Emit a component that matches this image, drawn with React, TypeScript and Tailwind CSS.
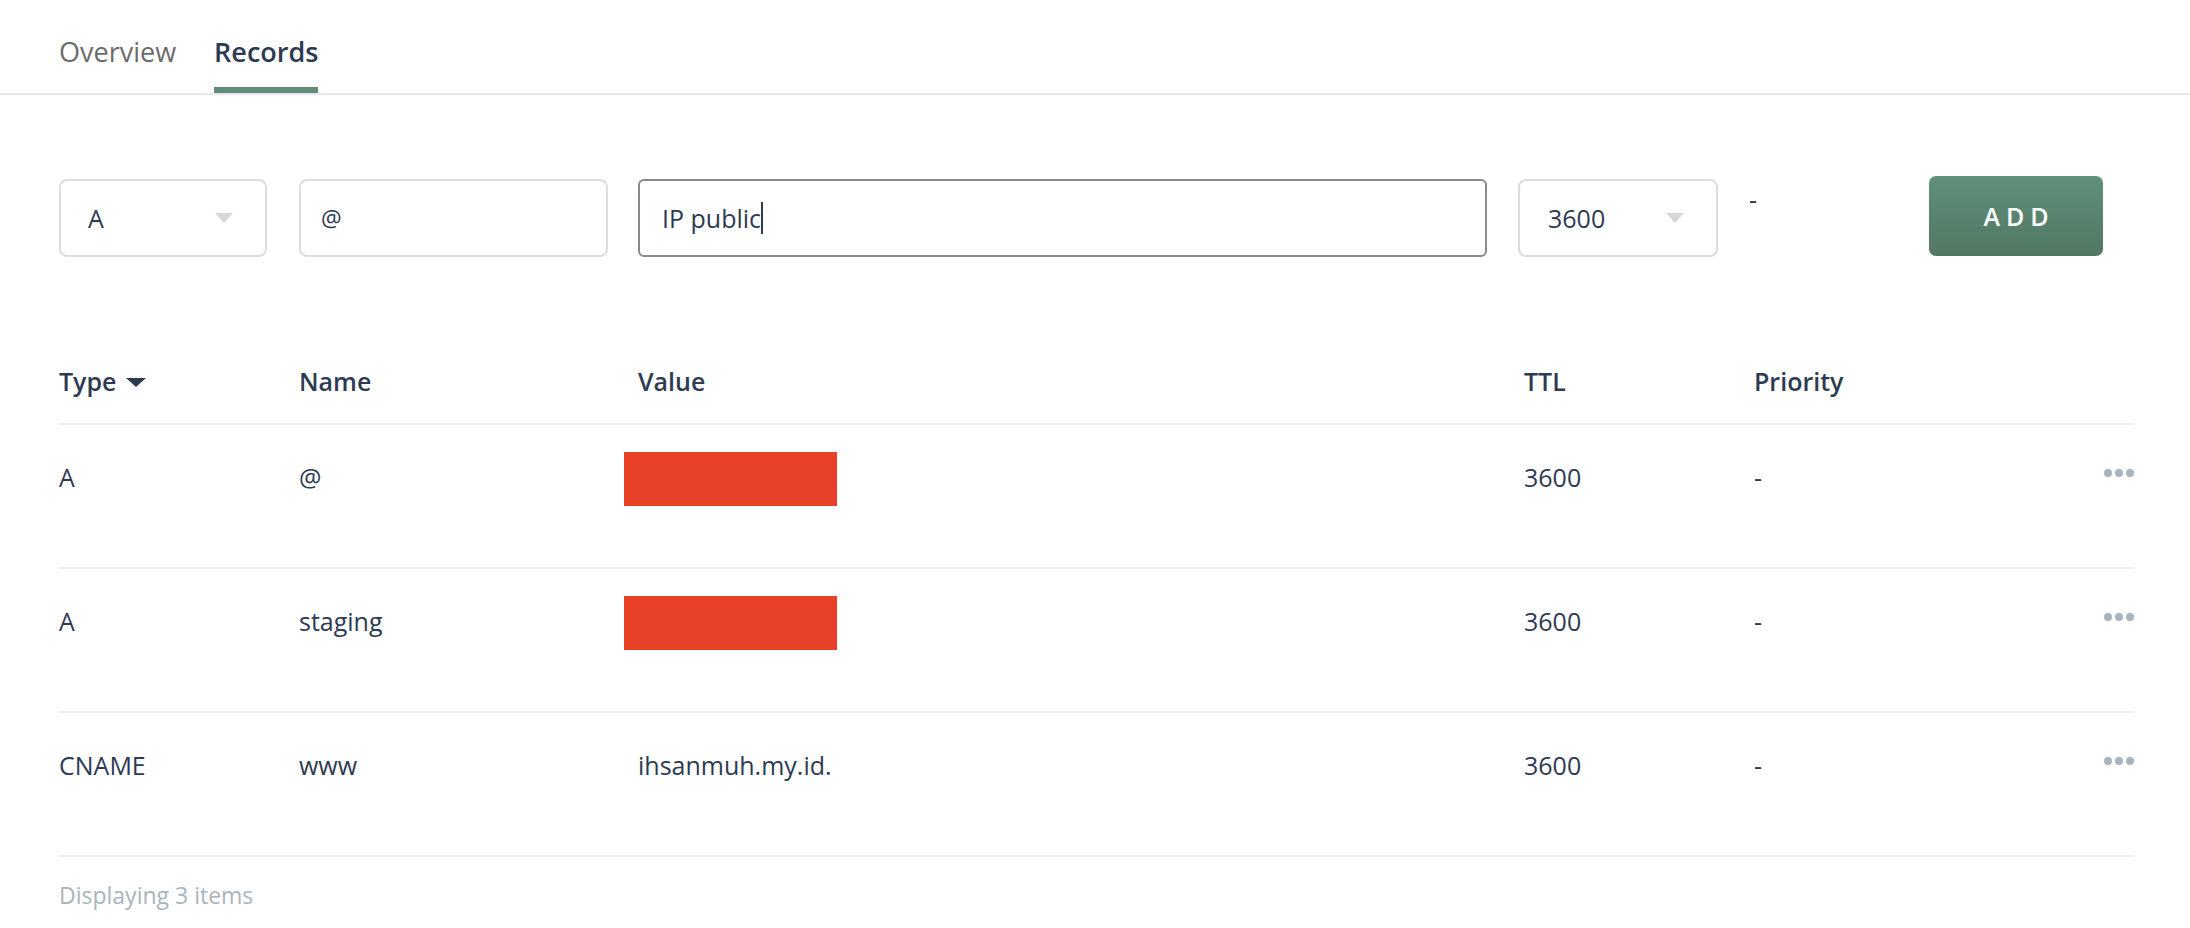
import React from "react";

type DnsRecord = {
  type: string;
  name: string;
  value: string | null; // null = value hidden behind a red block
  ttl: string;
  priority: string;
};

const records: DnsRecord[] = [
  { type: "A", name: "@", value: null, ttl: "3600", priority: "-" },
  { type: "A", name: "staging", value: null, ttl: "3600", priority: "-" },
  { type: "CNAME", name: "www", value: "ihsanmuh.my.id.", ttl: "3600", priority: "-" },
];

const cols = "grid grid-cols-[240px_339px_886px_230px_1fr_auto]";

function Caret() {
  return (
    <span className="h-0 w-0 border-l-[9px] border-r-[9px] border-t-[10px] border-l-transparent border-r-transparent border-t-[#d7d7d7]" />
  );
}

function Dots() {
  return (
    <div className="flex h-[54px] items-center gap-[3px] pb-[12px]">
      <span className="h-[8px] w-[8px] rounded-full bg-[#aab4bd]" />
      <span className="h-[8px] w-[8px] rounded-full bg-[#aab4bd]" />
      <span className="h-[8px] w-[8px] rounded-full bg-[#aab4bd]" />
    </div>
  );
}

export default function App() {
  return (
    <div className="min-h-[928px] w-full bg-white font-['Open_Sans',sans-serif] text-[25px] leading-[30px] text-[#2d3a52]">
      {/* tabs */}
      <div className="flex h-[95px] items-end gap-[38px] border-b-2 border-[#e4e8ec] pl-[59px] text-[27px]">
        <div className="pb-[26px] text-[#6b6b6b]">Overview</div>
        <div className="border-b-[6px] border-[#5e8c76] pb-[20px] font-semibold">Records</div>
      </div>

      {/* add record form */}
      <div className="mt-[84px] flex items-start pl-[59px]">
        <div className="flex h-[78px] w-[208px] items-center justify-between rounded-[8px] border-2 border-[#dcdcdc] pl-[27px] pr-[32px]">
          <span>A</span>
          <Caret />
        </div>
        <div className="ml-[32px] flex h-[78px] w-[309px] items-center rounded-[8px] border-2 border-[#dcdcdc] pl-[20px]">
          <span className="text-[23px]">@</span>
        </div>
        <div className="ml-[30px] flex h-[78px] w-[849px] items-center rounded-[6px] border-2 border-[#8a8a8a] pl-[22px]">
          <span>IP public</span>
          <span className="h-[32px] w-[2px] bg-[#2d3a52]" />
        </div>
        <div className="ml-[31px] flex h-[78px] w-[200px] items-center justify-between rounded-[8px] border-2 border-[#dcdcdc] pl-[28px] pr-[32px]">
          <span>3600</span>
          <Caret />
        </div>
        <div className="ml-[31px] mt-[5px] w-[8px]">-</div>
        <button className="-mt-[3px] ml-[172px] flex h-[80px] w-[174px] items-center justify-center rounded-[7px] bg-gradient-to-b from-[#60907a] to-[#527864] pl-[6px] text-[25px] font-semibold tracking-[0.24em] text-white">
          ADD
        </button>
      </div>

      {/* records table */}
      <div className="ml-[59px] mt-[82px] w-[2075px]">
        <div className={`${cols} h-[86px] items-center border-b-2 border-[#f0f0f0] font-semibold`}>
          <div className="flex items-center gap-[10px]">
            <span>Type</span>
            <span className="mt-[2px] h-0 w-0 border-l-[10px] border-r-[10px] border-t-[9px] border-l-transparent border-r-transparent border-t-[#2d3a52]" />
          </div>
          <div>Name</div>
          <div>Value</div>
          <div>TTL</div>
          <div>Priority</div>
          <div className="w-[30px]" />
        </div>

        {records.map((r, i) => (
          <div key={i} className={`${cols} h-[144px] items-start border-b-2 border-[#f0f0f0] pt-[27px]`}>
            <div className="flex h-[50px] items-center">{r.type}</div>
            <div className="flex h-[50px] items-center">{r.name}</div>
            <div className="flex h-[50px] items-center">
              {r.value ? r.value : <div className="-ml-[14px] mt-[4px] h-[54px] w-[213px] shrink-0 bg-[#e94127]" />}
            </div>
            <div className="flex h-[50px] items-center">{r.ttl}</div>
            <div className="flex h-[50px] items-center">{r.priority}</div>
            <Dots />
          </div>
        ))}

        <div className="mt-[24px] text-[23px] leading-[28px] text-[#aab4bd]">Displaying 3 items</div>
      </div>
    </div>
  );
}
